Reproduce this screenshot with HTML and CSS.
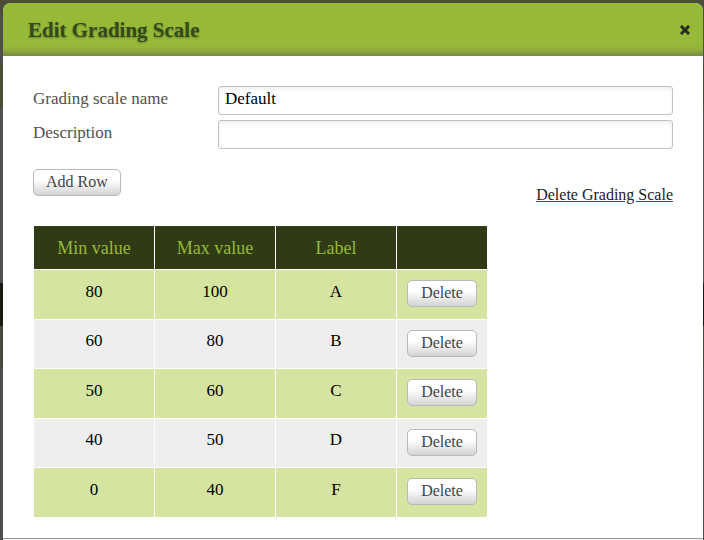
FILE: index.html
```html
<!DOCTYPE html>
<html lang="en">
<head>
<meta charset="utf-8">
<title>Edit Grading Scale</title>
<link rel="stylesheet" href="styles.css">
</head>
<body>
<main class="dialog" role="dialog" aria-labelledby="title">
  <header class="dialog-header">
    <h1 id="title">Edit Grading Scale</h1>
    <button class="close" type="button" aria-label="Close">
      <svg viewBox="0 0 10 10" width="10" height="10" aria-hidden="true"><path d="M2 2L8 8M8 2L2 8" fill="none" stroke="#262a24" stroke-width="3" stroke-linecap="square"/></svg>
    </button>
  </header>
  <form class="dialog-body">
    <div class="field">
      <label for="name">Grading scale name</label>
      <input id="name" type="text" value="Default">
    </div>
    <div class="field">
      <label for="description">Description</label>
      <input id="description" type="text">
    </div>
    <div class="actions">
      <button class="btn" type="button">Add Row</button>
      <a class="delete-link" href="#">Delete Grading Scale</a>
    </div>
    <table class="scale">
      <thead>
        <tr><th>Min value</th><th>Max value</th><th>Label</th><th class="action-column"></th></tr>
      </thead>
      <tbody>
        <tr><td>80</td><td>100</td><td>A</td><td><button class="btn" type="button">Delete</button></td></tr>
        <tr><td>60</td><td>80</td><td>B</td><td><button class="btn" type="button">Delete</button></td></tr>
        <tr><td>50</td><td>60</td><td>C</td><td><button class="btn" type="button">Delete</button></td></tr>
        <tr><td>40</td><td>50</td><td>D</td><td><button class="btn" type="button">Delete</button></td></tr>
        <tr><td>0</td><td>40</td><td>F</td><td><button class="btn" type="button">Delete</button></td></tr>
      </tbody>
    </table>
  </form>
  <footer class="dialog-footer"></footer>
</main>
</body>
</html>
```
FILE: styles.css
```css
* {
  box-sizing: border-box;
}

body {
  margin: 0;
  padding: 3px 1px 0 3px;
  font-family: Georgia, "Liberation Serif", serif;
  font-size: 17px;
  line-height: 20px;
  color: #111;
  background: linear-gradient(#4b4b39 14px, #4f4d50 14px 63px, #4e4e38 63px 109px, #505051 109px 283px, #181b11 283px 326px, #4a4a3b 326px 368px, #4e4e4e 368px);
}

.dialog {
  background: #fff;
  border-radius: 8px 8px 0 0;
  overflow: hidden;
}

.dialog-header {
  display: flex;
  align-items: center;
  justify-content: space-between;
  height: 53px;
  padding: 0 13px 0 25px;
  background: #97b938;
  box-shadow: inset 0 -11px 9px -9px #66704f;
}

h1 {
  margin: 0;
  font-size: 21px;
  line-height: 28px;
  font-weight: bold;
  color: #35491a;
  text-shadow: 0 1px 2px #65802c;
}

.close {
  display: flex;
  padding: 0;
  border: 0;
  background: none;
}

.dialog-body {
  padding: 30px 30px 20px;
}

.field {
  display: flex;
  align-items: center;
  margin-bottom: 5px;
}

.field label {
  flex: 0 0 185px;
  padding-bottom: 3px;
  color: #505050;
}

.field input {
  flex: 1;
  min-width: 0;
  height: 29px;
  padding: 0 6px 3px;
  border: 1px solid #c2c2c2;
  border-radius: 3px;
  background: #fff;
  box-shadow: inset 0 2px 4px #eee;
  font: inherit;
  color: #000;
}

.actions {
  display: flex;
  align-items: flex-start;
  justify-content: space-between;
  margin-top: 20px;
}

.btn {
  min-width: 70px;
  height: 27px;
  padding: 0 12px 1px;
  border: 1px solid #b9b9b9;
  border-radius: 5px;
  background: linear-gradient(#fff 40%, #d3d3d3);
  font: inherit;
  font-size: 16px;
  color: #444;
}

.delete-link {
  margin-top: 16px;
  font-size: 16px;
  color: #222;
  text-decoration-color: #146464;
}

.scale {
  width: 455px;
  max-width: 100%;
  margin-top: 20px;
  table-layout: fixed;
  border-collapse: separate;
  border-spacing: 1px;
  text-align: center;
}

.scale th {
  height: 43px;
  padding: 0;
  background: #303b15;
  font-size: 18px;
  font-weight: normal;
  color: #97b938;
}

.scale .action-column {
  width: 90px;
}

.scale td {
  height: 49px;
  padding: 0 0 6px;
  background: #d6e4a1;
  color: #000;
}

.scale td:last-child {
  padding: 0 0 2px;
}

.scale tr:nth-child(even) td {
  height: 48px;
  background: #eee;
}

.dialog-footer {
  height: 2px;
  border-top: 1px solid #999;
  background: #f4f4f4;
}
```
